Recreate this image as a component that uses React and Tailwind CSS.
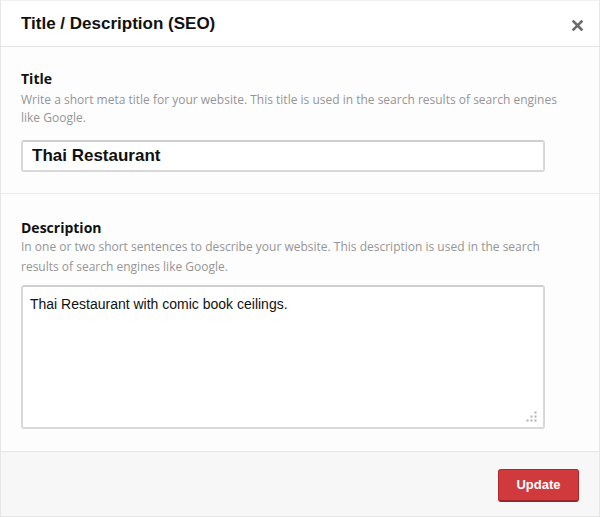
import React, { useState } from 'react';

// SEO title / description dialog

export default function App() {
  const [title, setTitle] = useState('Thai Restaurant');
  const [desc, setDesc] = useState('Thai Restaurant with comic book ceilings.');

  return (
    <div className="w-[600px] h-[517px] bg-white border border-[#e6e6e6] border-t-[#f0f0f0] flex flex-col font-['Liberation_Sans',Arial,sans-serif]">
      {/* header */}
      <div className="h-[46px] shrink-0 flex items-center justify-between pl-[20px] pr-[12px] border-b border-[#e3e3e3] bg-white">
        <h1 className="text-[17px] font-bold text-[#111] pt-[1px]">Title / Description (SEO)</h1>
        <button type="button" className="text-[#6b6b6b] w-[20px] h-[20px] flex items-center justify-center mt-[3px]" aria-label="Close">
          <svg width="11" height="11" viewBox="0 0 11 11">
            <path d="M1.5 1.5 L9.5 9.5 M9.5 1.5 L1.5 9.5" stroke="currentColor" strokeWidth="2.6" strokeLinecap="square" />
          </svg>
        </button>
      </div>

      {/* title */}
      <div className="h-[147px] shrink-0 bg-[#fdfdfd] border-b border-[#ececec] px-[20px] pt-[23px]">
        <label className="block text-[14px] font-bold text-[#111] leading-[18px] font-['Open_Sans',sans-serif]">Title</label>
        <p className="w-[545px] text-[12px] text-[#959595] leading-[18px] mt-[3px] font-['Open_Sans',sans-serif]">
          Write a short meta title for your website. This title is used in the search results of search engines like Google.
        </p>
        <input
          value={title}
          onChange={(e) => setTitle(e.target.value)}
          className="mt-[13px] w-[524px] h-[32px] bg-white border-2 border-[#d9d9d9] border-t-[#cfcfcf] rounded-[3px] px-[9px] text-[17px] font-bold text-[#111] outline-none"
        />
      </div>

      {/* description */}
      <div className="flex-1 bg-[#fdfdfd] border-b border-[#e6e6e6] px-[20px] pt-[25px]">
        <label className="block text-[14px] font-bold text-[#111] leading-[18px] font-['Open_Sans',sans-serif]">Description</label>
        <p className="text-[12px] text-[#959595] leading-[20px] font-['Open_Sans',sans-serif]">
          In one or two short sentences to describe your website. This description is used in the search results of search engines like Google.
        </p>
        <div className="relative mt-[8px] w-[524px]">
          <textarea
            value={desc}
            onChange={(e) => setDesc(e.target.value)}
            className="block w-full h-[144px] bg-white border-2 border-[#d9d9d9] border-t-[#cfcfcf] rounded-[3px] px-[7px] py-[7px] text-[14px] text-[#111] outline-none resize-none"
          />
          {/* resize grip */}
          <svg className="absolute right-[8px] bottom-[7px] text-[#b0b0b0]" width="11" height="11" viewBox="0 0 11 11">
            <rect x="8.5" y="0.5" width="2" height="2" fill="currentColor" />
            <rect x="4.5" y="4.5" width="2" height="2" fill="currentColor" />
            <rect x="8.5" y="4.5" width="2" height="2" fill="currentColor" />
            <rect x="0.5" y="8.5" width="2" height="2" fill="currentColor" />
            <rect x="4.5" y="8.5" width="2" height="2" fill="currentColor" />
            <rect x="8.5" y="8.5" width="2" height="2" fill="currentColor" />
          </svg>
        </div>
      </div>

      {/* footer */}
      <div className="h-[64px] shrink-0 bg-[#f7f7f7] flex items-center justify-end pr-[20px]">
        <button
          type="button"
          className="w-[81px] h-[33px] rounded-[3px] bg-[#d13a3d] border border-[#b02a2d] border-b-2 border-b-[#9e2326] text-white text-[13px] font-bold mt-[3px]"
        >
          Update
        </button>
      </div>
    </div>
  );
}
